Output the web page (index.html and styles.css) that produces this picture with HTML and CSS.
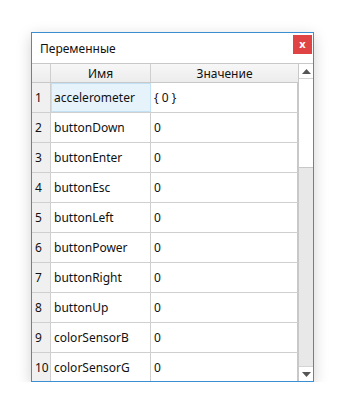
FILE: index.html
```html
<!DOCTYPE html>
<html lang="ru">
<head>
    <meta charset="UTF-8">
    <title>Переменные</title>
    <link rel="stylesheet" href="styles.css">
</head>
<body>
    <div class="window">
        <div class="titlebar">
            <span class="title">Переменные</span>
            <span class="close">x</span>
        </div>
        <div class="content">
            <div class="grid">
                <div class="row head">
                    <div class="num"></div>
                    <div class="name">Имя</div>
                    <div class="value">Значение</div>
                </div>
                <div class="row">
                    <div class="num">1</div>
                    <div class="name selected">accelerometer</div>
                    <div class="value">{ 0 }</div>
                </div>
                <div class="row">
                    <div class="num">2</div>
                    <div class="name">buttonDown</div>
                    <div class="value">0</div>
                </div>
                <div class="row">
                    <div class="num">3</div>
                    <div class="name">buttonEnter</div>
                    <div class="value">0</div>
                </div>
                <div class="row">
                    <div class="num">4</div>
                    <div class="name">buttonEsc</div>
                    <div class="value">0</div>
                </div>
                <div class="row">
                    <div class="num">5</div>
                    <div class="name">buttonLeft</div>
                    <div class="value">0</div>
                </div>
                <div class="row">
                    <div class="num">6</div>
                    <div class="name">buttonPower</div>
                    <div class="value">0</div>
                </div>
                <div class="row">
                    <div class="num">7</div>
                    <div class="name">buttonRight</div>
                    <div class="value">0</div>
                </div>
                <div class="row">
                    <div class="num">8</div>
                    <div class="name">buttonUp</div>
                    <div class="value">0</div>
                </div>
                <div class="row">
                    <div class="num">9</div>
                    <div class="name">colorSensorB</div>
                    <div class="value">0</div>
                </div>
                <div class="row">
                    <div class="num">10</div>
                    <div class="name">colorSensorG</div>
                    <div class="value">0</div>
                </div>
            </div>
            <div class="scrollbar">
                <div class="arrow up">
                    <svg width="9" height="5" viewBox="0 0 9 5"><path d="M0 5 L4.5 0 L9 5 Z" fill="#555"/></svg>
                </div>
                <div class="thumb"></div>
                <div class="track"></div>
                <div class="arrow down">
                    <svg width="9" height="5" viewBox="0 0 9 5"><path d="M0 0 L9 0 L4.5 5 Z" fill="#555"/></svg>
                </div>
            </div>
        </div>
    </div>
</body>
</html>
```

FILE: styles.css
```css
* {
    box-sizing: border-box;
    margin: 0;
    padding: 0;
}

body {
    font-family: "Noto Sans", "Open Sans", sans-serif;
    background-color: #ffffff;
    color: #111;
    padding: 32px 0 0 31px;
}

.window {
    width: 283px;
    height: 350px;
    border: 1px solid #3a8fd2;
    background: #fff;
    box-shadow: 0 4px 14px rgba(0, 0, 0, 0.18);
    display: flex;
    flex-direction: column;
    overflow: hidden;
}

.titlebar {
    height: 30px;
    display: flex;
    align-items: center;
    justify-content: space-between;
    padding: 0 1px 0 8px;
}

.title {
    font-size: 12px;
    padding-top: 1px;
}

.close {
    align-self: flex-start;
    width: 19px;
    height: 19px;
    background: #e04343;
    color: #fff;
    font-size: 11px;
    font-weight: bold;
    display: flex;
    align-items: center;
    justify-content: center;
    padding-bottom: 2px;
    margin-top: 2px;
}

.content {
    flex: 1;
    display: flex;
    overflow: hidden;
    border-top: 1px solid #c8c8c8;
}

.grid {
    width: 266px;
    display: flex;
    flex-direction: column;
}

.row {
    display: grid;
    grid-template-columns: 19px 100px 147px;
    height: 30px;
    flex-shrink: 0;
    border-bottom: 1px solid #cfcfcf;
    font-size: 12px;
}

.row > div {
    display: flex;
    align-items: center;
    border-right: 1px solid #cfcfcf;
}

.row .num {
    background: #f0f0f0;
    padding-left: 3px;
    font-size: 12px;
}

.row .name {
    padding-left: 3px;
}

.row .value {
    padding-left: 3px;
    border-right: 1px solid #c8c8c8;
}

.row .selected {
    background: #e6f3fb;
    outline: 1px solid #c2e1f5;
    outline-offset: -1px;
}

.row.head {
    height: 19px;
    background: #f2f2f2;
    border-bottom: 1px solid #c8c8c8;
}

.row.head > div {
    justify-content: center;
    padding-left: 0;
    background: linear-gradient(#f7f7f7, #ececec);
}

.row.head .value {
    border-right: none;
}

.scrollbar {
    width: 15px;
    display: flex;
    flex-direction: column;
    background: #e8e8e8;
    border-left: 1px solid #c8c8c8;
}

.arrow {
    height: 15px;
    display: flex;
    align-items: center;
    justify-content: center;
    background: #fff;
}

.arrow.up {
    border-bottom: 1px solid #d4d4d4;
}

.arrow.down {
    border-top: 1px solid #d4d4d4;
}

.thumb {
    height: 89px;
    background: #fff;
    border-bottom: 1px solid #c8c8c8;
}

.track {
    flex: 1;
}
```
